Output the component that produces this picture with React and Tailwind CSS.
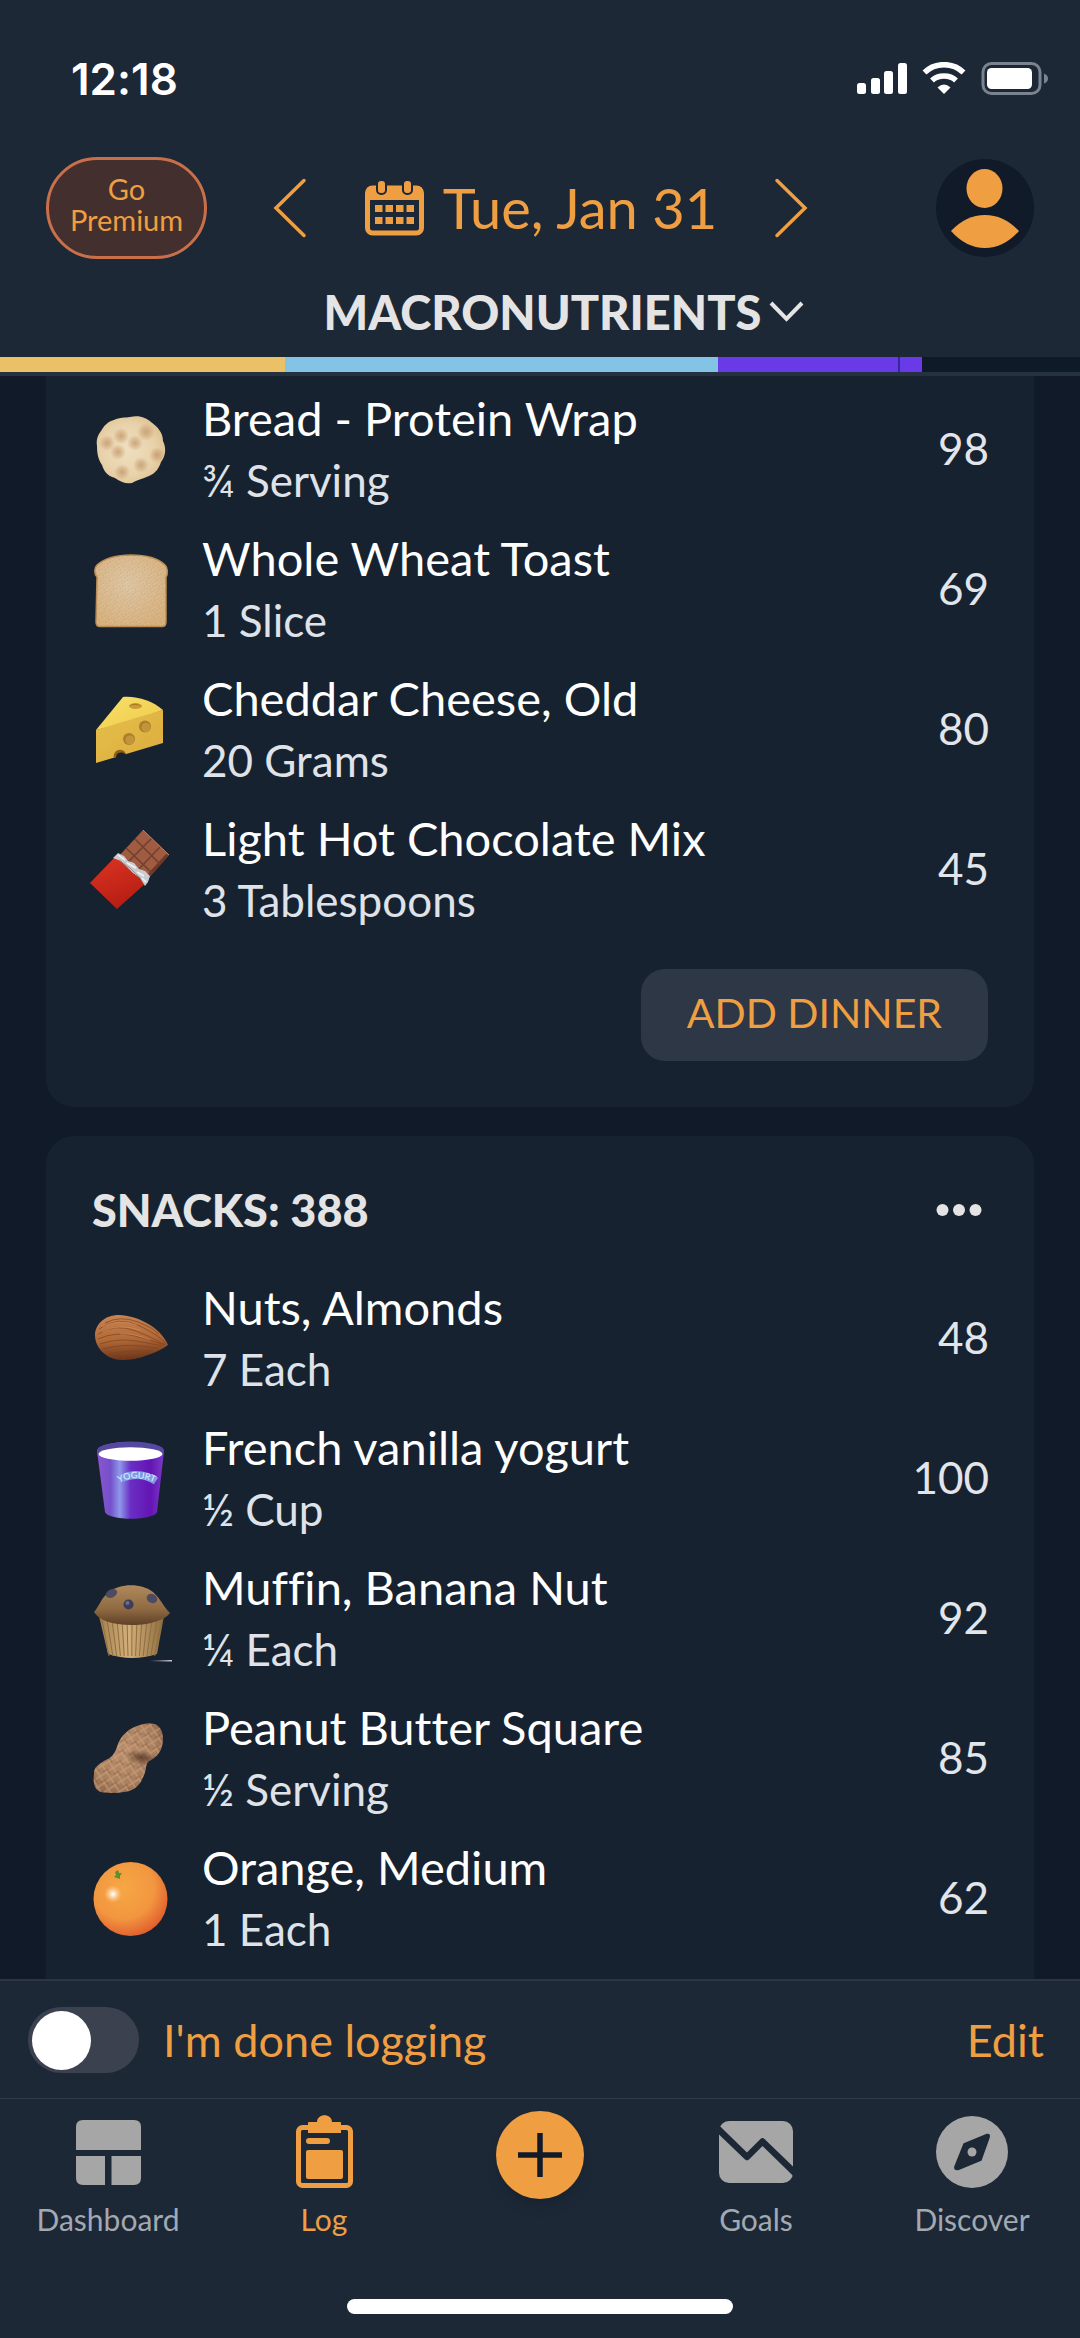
import React, { useState } from "react";

function Tortilla() {
  const spots = [
    [31, 27, 6], [45, 34, 6], [17, 34, 6], [56, 23, 7], [28, 43, 6],
    [51, 56, 6], [32, 63, 6], [67, 46, 6],
  ];
  return (
    <svg viewBox="0 0 80 80" className="size-20 shrink-0" aria-hidden="true">
      <defs>
        <radialGradient id="tortilla" cx="0.45" cy="0.5" r="0.6">
          <stop offset="0" stopColor="#efdfc0" />
          <stop offset="0.65" stopColor="#e8d2ab" />
          <stop offset="1" stopColor="#dcbf8e" />
        </radialGradient>
        <radialGradient id="spot">
          <stop offset="0" stopColor="#b98a5c" stopOpacity="0.65" />
          <stop offset="0.5" stopColor="#bf9264" stopOpacity="0.4" />
          <stop offset="1" stopColor="#c59460" stopOpacity="0" />
        </radialGradient>
      </defs>
      <path d="M24 11C30 8 35 9 40 8C50 6 56 9 61 13C68 18 73 24 73 32C77 40 75 48 71 53C69 59 66 64 59 67C52 70 47 71 42 74C35 75 31 73 25 69C17 67 14 62 12 56C8 50 7 44 7 37C6 30 8 26 11 22C14 17 17 13 24 11Z" fill="url(#tortilla)" />
      {spots.map(([x, y, r]) => <circle key={x + "-" + y} cx={x} cy={y} r={r + 2} fill="url(#spot)" />)}
    </svg>
  );
}

function Toast() {
  return (
    <svg viewBox="0 0 80 80" className="size-20 shrink-0" aria-hidden="true">
      <defs>
        <radialGradient id="toast" cx="0.45" cy="0.4" r="0.65">
          <stop offset="0" stopColor="#dcc5a4" />
          <stop offset="1" stopColor="#d6af7c" />
        </radialGradient>
        <pattern id="crumb" width="7" height="6" patternUnits="userSpaceOnUse" patternTransform="rotate(23)">
          <path d="M1 1h1M4 2h1M2 4h1M6 5h1" stroke="#b98f5c" strokeWidth="1" opacity="0.5" />
          <path d="M3 1h1M5 4h1M0 5h1" stroke="#ecdcbd" strokeWidth="1" opacity="0.5" />
        </pattern>
      </defs>
      <path d="M7 28C4 25 4 19 7 16C15 9 27 6 41 6C55 6 68 9 75 16C78 19 78 25 76 28V73Q76 77.500 72 77.500H10Q6 77.500 6 73Z" fill="url(#toast)" stroke="#b98a54" strokeWidth="1.500" />
      <path d="M7 28C4 25 4 19 7 16C15 9 27 6 41 6C55 6 68 9 75 16C78 19 78 25 76 28V73Q76 77 72 77H10Q6 77 6 73Z" fill="url(#crumb)" />
    </svg>
  );
}

function Cheese() {
  return (
    <svg viewBox="0 0 80 80" className="size-20 shrink-0" aria-hidden="true">
      <defs>
        <linearGradient id="cheeseTop" x1="0" y1="0" x2="1" y2="1">
          <stop offset="0" stopColor="#f8df6a" />
          <stop offset="1" stopColor="#efcb49" />
        </linearGradient>
        <linearGradient id="cheeseSide" x1="0" y1="0" x2="1" y2="1">
          <stop offset="0" stopColor="#e6bf4a" />
          <stop offset="1" stopColor="#dbac3e" />
        </linearGradient>
      </defs>
      <path d="M6 41L33 8C48 7 62 12 73 21L40 33Z" fill="url(#cheeseTop)" />
      <path d="M6 41Q42 30 73 21V54L6 74Z" fill="url(#cheeseSide)" />
      <ellipse cx="45.500" cy="17" rx="6.500" ry="3" fill="#c99c35" />
      <path d="M39 16.500Q45 13 51 16.500Q45 15.500 39 16.500Z" fill="#a87c22" />
      <circle cx="55" cy="37.500" r="6" fill="#ab7f2c" />
      <circle cx="56" cy="38.500" r="4.500" fill="#c2953a" />
      <circle cx="39" cy="50" r="6" fill="#ab7f2c" />
      <circle cx="40" cy="51" r="4.500" fill="#c2953a" />
      <path d="M24 69A6 6 0 0 1 36 65Z" fill="#8d6318" />
      <path d="M26.500 69A5 4 0 0 1 36 66Z" fill="#172231" />
    </svg>
  );
}

function Chocolate() {
  return (
    <svg viewBox="0 0 80 80" className="size-20 shrink-0" aria-hidden="true">
      <defs>
        <linearGradient id="wrap" x1="0.2" y1="0" x2="0.6" y2="1">
          <stop offset="0" stopColor="#d93422" />
          <stop offset="1" stopColor="#b51c12" />
        </linearGradient>
      </defs>
      <path d="M53 1L79 26L56 52L28 28Z" fill="#a05c43" />
      <path d="M79 26L56 52L55 48L76 25Z" fill="#6e3827" />
      <g stroke="#74402e" strokeWidth="1.700" fill="none">
        <path d="M62 9L37 34M70 18L46 43M45 10L70 35M36 19L62 44" />
      </g>
      <path d="M53 1L79 26" stroke="#bf8067" strokeWidth="1" />
      <path d="M0 54L25 28Q38 32 46 40Q53 46 56 54L27 80Z" fill="url(#wrap)" />
      <path d="M23 29L28 24L34 27L38 32L44 34L49 40L55 42L60 47L58 53L55 57L50 49L43 44L37 38L31 32Z" fill="#c9cccf" />
      <path d="M28 26L35 31M37 34L46 39M47 43L54 47M52 49L56 53" stroke="#f4f4f4" strokeWidth="1.500" />
      <path d="M29 31L40 39L51 50" stroke="#8f9499" strokeWidth="1" fill="none" />
    </svg>
  );
}

function Almond() {
  return (
    <svg viewBox="0 0 80 80" className="size-20 shrink-0" aria-hidden="true">
      <defs>
        <linearGradient id="almond" x1="0.4" y1="0" x2="0.5" y2="1">
          <stop offset="0" stopColor="#c98350" />
          <stop offset="0.55" stopColor="#b06837" />
          <stop offset="1" stopColor="#6b3317" />
        </linearGradient>
      </defs>
      <path d="M5 37C5 27 14 17 29 17C48 18 66 28 74 40Q77 44 78 47Q70 53 58 57C48 61 40 62 31 62C16 61 5 50 5 37Z" fill="url(#almond)" />
      <g fill="none" stroke="#7c4420" strokeWidth="0.900" opacity="0.8">
        <path d="M9 31Q28 17 50 28T76 46M8 36Q26 25 46 33T75 47M8 41Q26 33 45 38T74 47M10 46Q28 40 46 43T72 48M13 51Q32 46 50 48T69 50M18 56Q36 52 62 53M15 25Q30 17 48 24T68 36" />
      </g>
      <g fill="none" stroke="#db9a69" strokeWidth="0.700" opacity="0.7">
        <path d="M12 29Q28 20 47 27M12 34Q28 25 50 32M30 36Q44 35 60 42" />
      </g>
    </svg>
  );
}

function Yogurt() {
  return (
    <svg viewBox="0 0 80 80" className="size-20 shrink-0 overflow-visible" aria-hidden="true">
      <defs>
        <linearGradient id="cup">
          <stop offset="0" stopColor="#8d55cf" />
          <stop offset="0.2" stopColor="#7450cb" />
          <stop offset="0.34" stopColor="#8f97ea" />
          <stop offset="0.5" stopColor="#6a2fc4" />
          <stop offset="0.8" stopColor="#6414b4" />
          <stop offset="1" stopColor="#7a3cc8" />
        </linearGradient>
      </defs>
      <path d="M7 13C7 1 74 1 74 13L67 74C64 83 18 83 15 74Z" fill="url(#cup)" />
      <ellipse cx="40.500" cy="13" rx="33.500" ry="9.500" fill="#5548a0" />
      <ellipse cx="40.500" cy="16" rx="32" ry="6.800" fill="#fff" />
      <path d="M30 41Q49 32 66 43" fill="none" stroke="#7d9be6" strokeWidth="8" />
      <path id="labelArc" d="M29 44.500Q49 35 69 47" fill="none" />
      <text fill="#e6efff" className="font-[Lato] text-[9px]">
        <textPath href="#labelArc">YOGURT</textPath>
      </text>
    </svg>
  );
}

function Muffin() {
  const pleats = [0, 1, 2, 3, 4, 5, 6, 7, 8, 9, 10, 11, 12];
  return (
    <svg viewBox="0 0 80 80" className="size-20 shrink-0 overflow-visible" aria-hidden="true">
      <defs>
        <linearGradient id="muffinTop" x1="0" y1="0" x2="0" y2="1">
          <stop offset="0" stopColor="#b08a5c" />
          <stop offset="0.6" stopColor="#8f6a42" />
          <stop offset="1" stopColor="#5f4128" />
        </linearGradient>
        <linearGradient id="paper">
          <stop offset="0" stopColor="#a37f4d" />
          <stop offset="0.45" stopColor="#d3b07a" />
          <stop offset="1" stopColor="#8f6c3f" />
        </linearGradient>
        <linearGradient id="crumbLine">
          <stop offset="0" stopColor="#aab" stopOpacity="0" />
          <stop offset="1" stopColor="#ccd" />
        </linearGradient>
      </defs>
      <path d="M9 38L18 76Q42 84 67 76L74 38Z" fill="url(#paper)" />
      {pleats.map((i) => (
        <path key={i} d={`M${12 + i * 5} 42L${19 + i * 3.8} 78`} stroke="#8f6e41" strokeWidth="1" />
      ))}
      <path d="M4 34C10 27 11 20 19 14C30 5 52 5 63 14C71 21 73 28 80 35C76 41 62 47 42 47C21 47 9 42 4 34Z" fill="url(#muffinTop)" />
      <ellipse cx="21.500" cy="15.500" rx="6" ry="4" transform="rotate(-25 21.500 15.500)" fill="#4d4a63" />
      <circle cx="38.500" cy="26.500" r="5" fill="#3f3c55" />
      <circle cx="37.500" cy="25" r="2" fill="#6d6b87" />
      <ellipse cx="62" cy="20.500" rx="5.500" ry="4.500" transform="rotate(25 62 20.500)" fill="#4d4a63" />
      <rect x="60" y="82" width="22" height="1.500" fill="url(#crumbLine)" />
    </svg>
  );
}

function Peanut() {
  return (
    <svg viewBox="0 0 80 80" className="size-20 shrink-0" aria-hidden="true">
      <defs>
        <radialGradient id="nut" cx="0.4" cy="0.4" r="0.7">
          <stop offset="0" stopColor="#b88e6c" />
          <stop offset="0.6" stopColor="#a97f5e" />
          <stop offset="1" stopColor="#7d573f" />
        </radialGradient>
        <radialGradient id="nutShade">
          <stop offset="0" stopColor="#4a2b1c" stopOpacity="0.75" />
          <stop offset="1" stopColor="#4a2b1c" stopOpacity="0" />
        </radialGradient>
        <pattern id="mesh" width="11" height="11" patternUnits="userSpaceOnUse" patternTransform="rotate(12)">
          <path d="M0 0L11 11M11 0L0 11" stroke="#cfa582" strokeWidth="1.500" opacity="0.6" />
          <path d="M2 6L5.500 2.500L9 6" fill="none" stroke="#80583e" strokeWidth="1.200" opacity="0.5" />
        </pattern>
        <clipPath id="nutShape">
          <path d="M50 7C58 5 65 5 68 8C73 12 74 21 72 28C70 37 63 41 59 43C55 46 57 51 54 57C50 68 44 73 34 74Q22 76 11 74C4 72 3 64 4 56C4 49 8 47 14 43C21 40 24 37 27 29C30 17 40 10 50 7Z" />
        </clipPath>
      </defs>
      <g clipPath="url(#nutShape)">
        <rect width="80" height="80" fill="url(#nut)" />
        <rect width="80" height="80" fill="url(#mesh)" />
        <ellipse cx="52" cy="40" rx="17" ry="8" transform="rotate(10 52 40)" fill="url(#nutShade)" />
      </g>
    </svg>
  );
}

function Orange() {
  return (
    <svg viewBox="0 0 80 80" className="size-20 shrink-0" aria-hidden="true">
      <defs>
        <radialGradient id="orange" cx="0.4" cy="0.35" r="0.7">
          <stop offset="0" stopColor="#f7a744" />
          <stop offset="0.6" stopColor="#f29640" />
          <stop offset="1" stopColor="#df5a2c" />
        </radialGradient>
        <radialGradient id="glow">
          <stop offset="0" stopColor="#fff" />
          <stop offset="0.3" stopColor="#ffe9cc" stopOpacity="0.85" />
          <stop offset="1" stopColor="#ffc681" stopOpacity="0" />
        </radialGradient>
      </defs>
      <circle cx="40.500" cy="41" r="37" fill="url(#orange)" />
      <circle cx="23" cy="36" r="9" fill="url(#glow)" />
      <path d="M28 12L29 15L32 15L30 18L30 21L27 20L24 19L26 17L25 14Z" fill="#5f8f2a" />
    </svg>
  );
}

const dinner = [
  { name: "Bread - Protein Wrap", amount: "¾ Serving", calories: 98, Icon: Tortilla },
  { name: "Whole Wheat Toast", amount: "1 Slice", calories: 69, Icon: Toast },
  { name: "Cheddar Cheese, Old", amount: "20 Grams", calories: 80, Icon: Cheese },
  { name: "Light Hot Chocolate Mix", amount: "3 Tablespoons", calories: 45, Icon: Chocolate },
];

const snacks = [
  { name: "Nuts, Almonds", amount: "7 Each", calories: 48, Icon: Almond },
  { name: "French vanilla yogurt", amount: "½ Cup", calories: 100, Icon: Yogurt },
  { name: "Muffin, Banana Nut", amount: "¼ Each", calories: 92, Icon: Muffin },
  { name: "Peanut Butter Square", amount: "½ Serving", calories: 85, Icon: Peanut },
  { name: "Orange, Medium", amount: "1 Each", calories: 62, Icon: Orange },
];

function FoodList({ items }) {
  return (
    <ul>
      {items.map(({ name, amount, calories, Icon }) => (
        <li key={name} className="flex items-center pr-[45px] pl-11">
          <Icon />
          <div className="ml-8 min-w-0 flex-1 py-2 leading-[62px]">
            <p className="text-[47px] text-white">{name}</p>
            <p className="text-[44px] text-[#dfe2e8]">{amount}</p>
          </div>
          <span className="pb-0.5 text-[44px] text-[#e2e5ea]">{calories}</span>
        </li>
      ))}
    </ul>
  );
}

function StatusBar() {
  return (
    <div className="flex items-center justify-between pt-[50px] pr-8 pl-[71px] text-white">
      <span className="font-[Inter] text-[44px] leading-[58px] font-semibold">12:18</span>
      <svg width="191" height="34" viewBox="0 0 191 34" aria-hidden="true">
        <g fill="#fff">
          <rect x="0" y="21" width="9" height="11" rx="2.500" />
          <rect x="14" y="16" width="9" height="16" rx="2.500" />
          <rect x="27" y="9" width="9" height="23" rx="2.500" />
          <rect x="41" y="1" width="9" height="31" rx="2.500" />
          <path d="M87 32L80.500 25.500Q87 19.500 93.500 25.500Z" />
        </g>
        <path d="M67.500 10.500C78 0 96 0 106.500 10.500" fill="none" stroke="#fff" strokeWidth="5.500" />
        <path d="M75 18.500C81 12.500 93 12.500 99 18.500" fill="none" stroke="#fff" strokeWidth="5.500" />
        <rect x="126" y="1.500" width="57" height="30" rx="8.500" fill="none" stroke="#7b838e" strokeWidth="3" />
        <rect x="130" y="6" width="45" height="21" rx="4.500" fill="#fff" />
        <path d="M187 11.500Q191 13 191 16.500Q191 20 187 21.500Z" fill="#7b838e" />
      </svg>
    </div>
  );
}

function DateBar() {
  return (
    <div className="mt-[49px] flex h-[102px] items-center px-[46px]">
      <button className="flex h-full w-[161px] items-center justify-center rounded-full border-[3px] border-[#c9704a] bg-[#432f2d] px-3 pb-2 text-[29px] leading-[31px] text-[#ef9e42]">
        Go Premium
      </button>
      <div className="flex flex-1 items-center justify-center">
        <button aria-label="Previous day">
          <svg width="34" height="60" viewBox="0 0 34 60" fill="none" stroke="#ef9e42" strokeWidth="3.500" strokeLinecap="round">
            <path d="M31 2.500L3 30L31 57.500" />
          </svg>
        </button>
        <button className="mr-[57px] ml-[58px] flex items-center gap-[19px] text-[#ef9e42]">
          <svg width="59" height="56" viewBox="0 0 59 56" aria-hidden="true">
            <rect x="2.500" y="8" width="54" height="45" rx="5" fill="none" stroke="currentColor" strokeWidth="5" />
            <path d="M1 20V12Q1 6 7 6H52Q58 6 58 12V20Z" fill="currentColor" />
            <rect x="12" y="0" width="9" height="14" rx="4" fill="currentColor" stroke="#1c2836" strokeWidth="2" />
            <rect x="38" y="0" width="9" height="14" rx="4" fill="currentColor" stroke="#1c2836" strokeWidth="2" />
            <path d="M10 28.500H49M10 40.500H49" stroke="currentColor" strokeWidth="7" strokeDasharray="7.500 3" />
          </svg>
          <span className="text-[56px] leading-[68px] whitespace-nowrap">Tue, Jan 31</span>
        </button>
        <button aria-label="Next day">
          <svg width="34" height="60" viewBox="0 0 34 60" fill="none" stroke="#ef9e42" strokeWidth="3.500" strokeLinecap="round">
            <path d="M3 2.500L31 30L3 57.500" />
          </svg>
        </button>
      </div>
      <button aria-label="Profile" className="ml-[62px]">
        <svg width="98" height="98" viewBox="0 0 98 98">
          <circle cx="49" cy="49" r="49" fill="#101a28" />
          <ellipse cx="48.500" cy="29.500" rx="18" ry="19.500" fill="#f09e42" />
          <path d="M15 72Q30 56 49 56Q68 56 83 72Q68 89 49 89Q30 89 15 72Z" fill="#f09e42" />
        </svg>
      </button>
    </div>
  );
}

const segments = [
  { id: "protein", width: 285, color: "bg-[#ebc167]" },
  { id: "carbs", width: 433, color: "bg-[#82c3e6]" },
  { id: "fat", width: 180, color: "bg-[#6a3ae9]" },
  { id: "mark", width: 2, color: "bg-[#35289a]" },
  { id: "over", width: 22, color: "bg-[#6a3ae9]" },
];

const tabs = [
  {
    label: "Dashboard",
    icon: (
      <svg width="65" height="74" viewBox="0 0 65 74" fill="currentColor" aria-hidden="true">
        <path d="M0 35V12Q0 5 7 5H58Q65 5 65 12V35Z" />
        <path d="M0 41H29V70H7Q0 70 0 63Z" />
        <path d="M35.500 41H65V63Q65 70 58 70H35.500Z" />
      </svg>
    ),
  },
  {
    label: "Log",
    active: true,
    icon: (
      <svg width="57" height="74" viewBox="0 0 57 74" fill="currentColor" aria-hidden="true">
        <rect x="2.500" y="12.500" width="52" height="58" rx="4" fill="none" stroke="currentColor" strokeWidth="5" />
        <path d="M12 8Q12 7 13 7H21C21-2 36-2 36 7H44Q45 7 45 8V18H12Z" />
        <rect x="10" y="23" width="24" height="6" rx="3" />
        <rect x="10" y="35" width="37" height="29" rx="2" />
      </svg>
    ),
  },
  { label: "Add", fab: true },
  {
    label: "Goals",
    icon: (
      <svg width="74" height="74" viewBox="0 0 74 74" aria-hidden="true">
        <rect x="0" y="6" width="74" height="62" rx="10" fill="currentColor" />
        <path d="M-4 11L28 42L43.500 26.500L78 60" fill="none" stroke="#1c2836" strokeWidth="6.500" strokeLinejoin="round" />
      </svg>
    ),
  },
  {
    label: "Discover",
    icon: (
      <svg width="72" height="74" viewBox="0 0 72 74" aria-hidden="true">
        <circle cx="36" cy="37" r="36" fill="currentColor" />
        <path d="M28 29L51 19.500Q54 19 53 22.500L45 45L22 54.500Q18 55 19 51.500Z" fill="#1c2836" stroke="#1c2836" strokeWidth="1.500" strokeLinejoin="round" />
        <circle cx="36" cy="37" r="4.500" fill="currentColor" />
      </svg>
    ),
  },
];

export default function App() {
  const [done, setDone] = useState(false);
  return (
    <div className="flex min-h-screen flex-col bg-[#101a29] font-[Lato,sans-serif] [font-variant-ligatures:none]">
      <header className="border-b-4 border-[#26313f] bg-[#1c2836]">
        <StatusBar />
        <DateBar />
        <div className="flex justify-center pt-[22px] pb-[14px] pl-12">
          <button className="flex items-center gap-2 text-[47px] leading-[62px] font-black text-[#e4e4e4]">
            <span>MACRONUTRIENTS</span>
            <svg width="35" height="22" viewBox="0 0 35 22" fill="none" stroke="#e4e4e4" strokeWidth="4" aria-hidden="true">
              <path d="M2 2L17.500 18L33 2" />
            </svg>
          </button>
        </div>
        <div className="flex h-[15px] bg-[#0f1a28]">
          {segments.map((s) => (
            <div key={s.id} className={s.color} style={{ width: `${(s.width / 1080) * 100}%` }} />
          ))}
        </div>
      </header>

      <main className="flex flex-1 flex-col gap-[29px] px-[46px]">
        <section className="rounded-b-[28px] bg-[#172231] pt-[3px] pb-[46px]">
          <FoodList items={dinner} />
          <div className="mt-[30px] mr-[46px] flex justify-end">
            <button className="h-[92px] rounded-3xl bg-[#2d3745] px-[46px] pb-1 text-[41px] text-[#ef9e42]">ADD DINNER</button>
          </div>
        </section>
        <section className="flex-1 rounded-t-[28px] bg-[#172231]">
          <div className="flex items-center justify-between pt-[45px] pr-[52px] pb-[29px] pl-[46px]">
            <h2 className="text-[45px] leading-[58px] font-black text-[#e4e4e4]">SNACKS: 388</h2>
            <button aria-label="Snack options">
              <svg width="46" height="12" viewBox="0 0 46 12" fill="#e4e4e4">
                <circle cx="6.500" cy="6" r="6" />
                <circle cx="23" cy="6" r="6" />
                <circle cx="39.500" cy="6" r="6" />
              </svg>
            </button>
          </div>
          <FoodList items={snacks} />
        </section>
      </main>

      <footer className="bg-[#1c2836]">
        <div className="flex items-center justify-between border-t-2 border-[#2b3643] pt-[26px] pr-9 pb-[25px] pl-7">
          <label className="flex items-center text-[45px] leading-[66px] text-[#ef9e42]">
            <input type="checkbox" role="switch" className="peer sr-only" checked={done} onChange={(e) => setDone(e.target.checked)} />
            <span className="mr-6 flex h-[66px] w-[111px] items-center rounded-full bg-[#3b414e] px-1 peer-checked:justify-end peer-checked:bg-[#ef9e42]">
              <span className="size-[59px] rounded-full bg-white" />
            </span>
            I'm done logging
          </label>
          <button className="text-[45px] leading-[66px] text-[#ef9e42]">Edit</button>
        </div>
        <nav className="grid grid-cols-5 border-t border-[#303a47] pt-4 pb-[60px]">
          {tabs.map((t) =>
            t.fab ? (
              <button key={t.label} aria-label={t.label} className="-mt-1 flex size-[88px] items-center justify-center self-start justify-self-center rounded-full bg-[#f09e42] shadow-lg">
                <svg width="44" height="44" viewBox="0 0 44 44" stroke="#101a28" strokeWidth="5.500">
                  <path d="M0 22H44M22 0V44" />
                </svg>
              </button>
            ) : (
              <a key={t.label} href={"#" + t.label} className={t.active ? "flex flex-col items-center text-[#ef9e42]" : "flex flex-col items-center text-[#a6a6a6]"}>
                {t.icon}
                <span className={t.active ? "mt-2.5 text-[30px] leading-[40px]" : "mt-2.5 text-[30px] leading-[40px] text-[#a3a9b1]"}>{t.label}</span>
              </a>
            )
          )}
        </nav>
        <div className="mx-auto mb-6 h-[15px] w-[386px] rounded-full bg-white" />
      </footer>
    </div>
  );
}
